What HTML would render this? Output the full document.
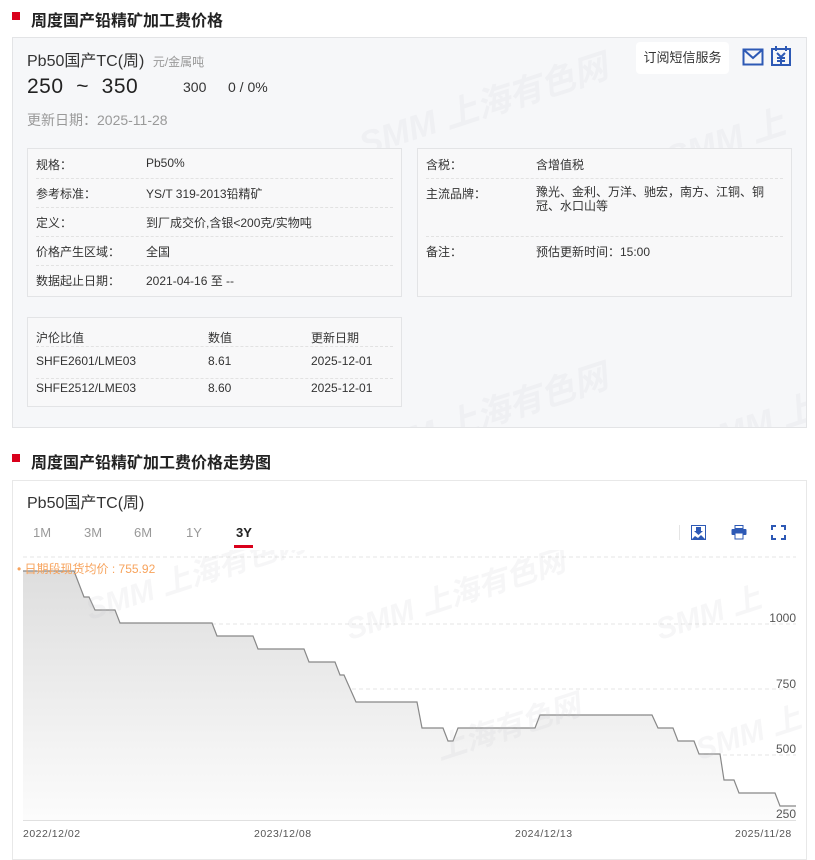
<!DOCTYPE html>
<html><head><meta charset="utf-8"><style>
*{margin:0;padding:0;box-sizing:border-box}
body{width:815px;height:851px;overflow:hidden;background:#fff;font-family:"Liberation Sans","Noto Sans CJK SC",sans-serif;color:#333;position:relative}
.a{position:absolute;white-space:nowrap}
.h{font-size:16px;font-weight:bold;color:#222}
.sq{position:absolute;width:8px;height:8px;background:#d9001b}
.card{position:absolute;left:12px;top:37px;width:795px;height:391px;background:#f6f7f9;border:1px solid #e3e4e6;overflow:hidden}
.box{position:absolute;border:1px solid #e3e4e6;background:#f8f8f9}
.row{position:absolute;left:8px;right:8px;border-bottom:1px dashed #e2e2e2;font-size:12px;color:#333}
.row span{position:absolute;top:2px}
.wm{position:absolute;color:rgba(200,200,205,0.15);font-weight:bold;font-style:italic;font-size:34px;transform:rotate(-18deg);white-space:nowrap;font-family:"Liberation Sans","Noto Sans CJK SC",sans-serif}
.tab{position:absolute;top:525px;font-size:13px;color:#999}
.yl{position:absolute;font-size:12px;color:#555;right:19px}
.xl{position:absolute;top:828px;font-size:10.5px;color:#555;letter-spacing:0.5px}
</style></head><body>
<div class="sq" style="left:12px;top:12px"></div>
<div class="a h" style="left:31px;top:7px">周度国产铅精矿加工费价格</div>

<div class="card">
<div class="wm" style="left:340px;top:40px">SMM 上海有色网</div>
<div class="wm" style="left:650px;top:75px">SMM 上</div>
<div class="wm" style="left:340px;top:350px">SMM 上海有色网</div>
<div class="wm" style="left:680px;top:360px">SMM 上</div>
<div class="a" style="left:14px;top:9px;font-size:16px;color:#333">Pb50国产TC(周) <span style="font-size:12px;color:#999;margin-left:4px">元/金属吨</span></div>
<div class="a" style="left:14px;top:37px;font-size:21px;color:#222;letter-spacing:0.5px">250&nbsp; ~&nbsp; 350</div>
<div class="a" style="left:170px;top:41px;font-size:14px;color:#333">300</div>
<div class="a" style="left:215px;top:41px;font-size:14px;color:#333">0 / 0%</div>
<div class="a" style="left:14px;top:72px;font-size:14px;color:#999">更新日期：2025-11-28</div>
<div class="a" style="left:623px;top:4px;width:93px;height:32px;background:#fff;border-radius:4px;font-size:13px;color:#333;line-height:32px;text-align:center">订阅短信服务</div>
<svg class="a" style="left:729px;top:9px" width="22" height="20" viewBox="0 0 22 20"><rect x="1.5" y="2.5" width="19" height="15" fill="none" stroke="#2d59b5" stroke-width="2"/><path d="M2 3 L11 11 L20 3" fill="none" stroke="#2d59b5" stroke-width="2"/></svg>
<svg class="a" style="left:757px;top:7px" width="22" height="22" viewBox="0 0 22 22"><rect x="2" y="4" width="18" height="16" fill="none" stroke="#2d59b5" stroke-width="2"/><path d="M6 1v5M16 1v5M7 8l4 4 4-4M11 12v7M7 13h8M7 16h8" fill="none" stroke="#2d59b5" stroke-width="2"/></svg>

<div class="box" style="left:14px;top:110px;width:375px;height:149px">
 <div class="row" style="top:5px;height:25px"><span>规格：</span><span style="left:110px">Pb50%</span></div>
 <div class="row" style="top:34px;height:25px"><span>参考标准：</span><span style="left:110px">YS/T 319-2013铅精矿</span></div>
 <div class="row" style="top:63px;height:25px"><span>定义：</span><span style="left:110px">到厂成交价,含银&lt;200克/实物吨</span></div>
 <div class="row" style="top:92px;height:25px"><span>价格产生区域：</span><span style="left:110px">全国</span></div>
 <div class="row" style="top:121px;height:25px;border:none"><span>数据起止日期：</span><span style="left:110px">2021-04-16 至 --</span></div>
</div>
<div class="box" style="left:404px;top:110px;width:375px;height:149px">
 <div class="row" style="top:5px;height:25px"><span>含税：</span><span style="left:110px">含增值税</span></div>
 <div class="row" style="top:34px;height:54px"><span>主流品牌：</span><span style="left:110px;white-space:normal;width:240px;line-height:14px">豫光、金利、万洋、驰宏，南方、江铜、铜冠、水口山等</span></div>
 <div class="row" style="top:92px;height:25px;border:none"><span>备注：</span><span style="left:110px">预估更新时间：15:00</span></div>
</div>
<div class="box" style="left:14px;top:279px;width:375px;height:90px">
 <div class="row" style="top:9px;height:20px"><span>沪伦比值</span><span style="left:172px">数值</span><span style="left:275px">更新日期</span></div>
 <div class="row" style="top:34px;height:27px"><span>SHFE2601/LME03</span><span style="left:172px">8.61</span><span style="left:275px">2025-12-01</span></div>
 <div class="row" style="top:61px;height:25px;border:none"><span>SHFE2512/LME03</span><span style="left:172px">8.60</span><span style="left:275px">2025-12-01</span></div>
</div>
</div>

<div class="sq" style="left:12px;top:454px"></div>
<div class="a h" style="left:31px;top:449px">周度国产铅精矿加工费价格走势图</div>

<div style="position:absolute;left:12px;top:480px;width:795px;height:380px;border:1px solid #e8e8e8"></div>
<div class="a" style="left:27px;top:489px;font-size:16px;color:#333">Pb50国产TC(周)</div>
<div class="tab" style="left:33px">1M</div>
<div class="tab" style="left:84px">3M</div>
<div class="tab" style="left:134px">6M</div>
<div class="tab" style="left:186px">1Y</div>
<div class="tab" style="left:236px;color:#222;font-weight:bold">3Y</div>
<div class="a" style="left:234px;top:545px;width:19px;height:3px;background:#d9001b"></div>
<div class="a" style="left:679px;top:525px;width:1px;height:15px;background:#e5e5e5"></div>
<svg class="a" style="left:691px;top:525px" width="15" height="15" viewBox="0 0 15 15"><rect x="0.5" y="0.5" width="14" height="14" fill="none" stroke="#2d59b5"/><path d="M5 2h5v4h2l-4.5 4-4.5-4h2z" fill="#2d59b5"/><path d="M1 14l3-3 3 2 3-3 4 4z" fill="#2d59b5"/></svg>
<svg class="a" style="left:731px;top:525px" width="16" height="15" viewBox="0 0 16 15"><rect x="4" y="0.5" width="8" height="3" fill="none" stroke="#2d59b5"/><rect x="0.5" y="4" width="15" height="6" rx="1" fill="#2d59b5"/><rect x="4" y="8" width="8" height="6" fill="#fff" stroke="#2d59b5"/></svg>
<svg class="a" style="left:771px;top:525px" width="15" height="15" viewBox="0 0 15 15"><path d="M1 5V1h4M10 1h4v4M14 10v4h-4M5 14H1v-4" fill="none" stroke="#2d59b5" stroke-width="2"/></svg>

<svg class="a" style="left:0;top:550px" width="815" height="301" viewBox="0 550 815 301">
<defs><linearGradient id="g" x1="0" y1="0" x2="0" y2="1"><stop offset="0" stop-color="#dedede"/><stop offset="1" stop-color="#fcfcfc"/></linearGradient></defs>
<g stroke="#e6e6e6" stroke-dasharray="4 3">
<line x1="23" y1="557" x2="796" y2="557"/><line x1="23" y1="624" x2="796" y2="624"/><line x1="23" y1="689" x2="796" y2="689"/><line x1="23" y1="755" x2="796" y2="755"/></g>
<path d="M23 571H74L84 597H89L95 610H115L120 623H212L217 636H253L258 649H304L309 662H335L340 675H344L356 702H417L422 728H443L448 741H453L458 728H535L540 715H652L658 728H673L678 741H694L699 754H720L724 780H734L739 793H775L780 806H796V820H23Z" fill="url(#g)"/>
<path d="M23 571H74L84 597H89L95 610H115L120 623H212L217 636H253L258 649H304L309 662H335L340 675H344L356 702H417L422 728H443L448 741H453L458 728H535L540 715H652L658 728H673L678 741H694L699 754H720L724 780H734L739 793H775L780 806H796" fill="none" stroke="#888" stroke-width="1.2"/>
<line x1="23" y1="820.5" x2="796" y2="820.5" stroke="#e0e0e0"/>
<g font-size="30" font-weight="bold" font-style="italic" fill="rgba(200,200,205,0.16)" font-family="Liberation Sans, Noto Sans CJK SC, sans-serif">
<text x="90" y="620" transform="rotate(-18 90 620)">SMM 上海有色网</text>
<text x="350" y="640" transform="rotate(-18 350 640)">SMM 上海有色网</text>
<text x="660" y="640" transform="rotate(-18 660 640)">SMM 上</text>
<text x="440" y="760" transform="rotate(-18 440 760)">上海有色网</text>
<text x="700" y="760" transform="rotate(-18 700 760)">SMM 上</text></g>
</svg>
<div class="a" style="left:17px;top:560px;font-size:12px;color:#f7a35c">• 日期段现货均价 : 755.92</div>
<div class="yl" style="top:611px">1000</div>
<div class="yl" style="top:677px">750</div>
<div class="yl" style="top:742px">500</div>
<div class="yl" style="top:807px">250</div>
<div class="xl" style="left:23px">2022/12/02</div>
<div class="xl" style="left:254px">2023/12/08</div>
<div class="xl" style="left:515px">2024/12/13</div>
<div class="xl" style="left:735px">2025/11/28</div>
</body></html>
